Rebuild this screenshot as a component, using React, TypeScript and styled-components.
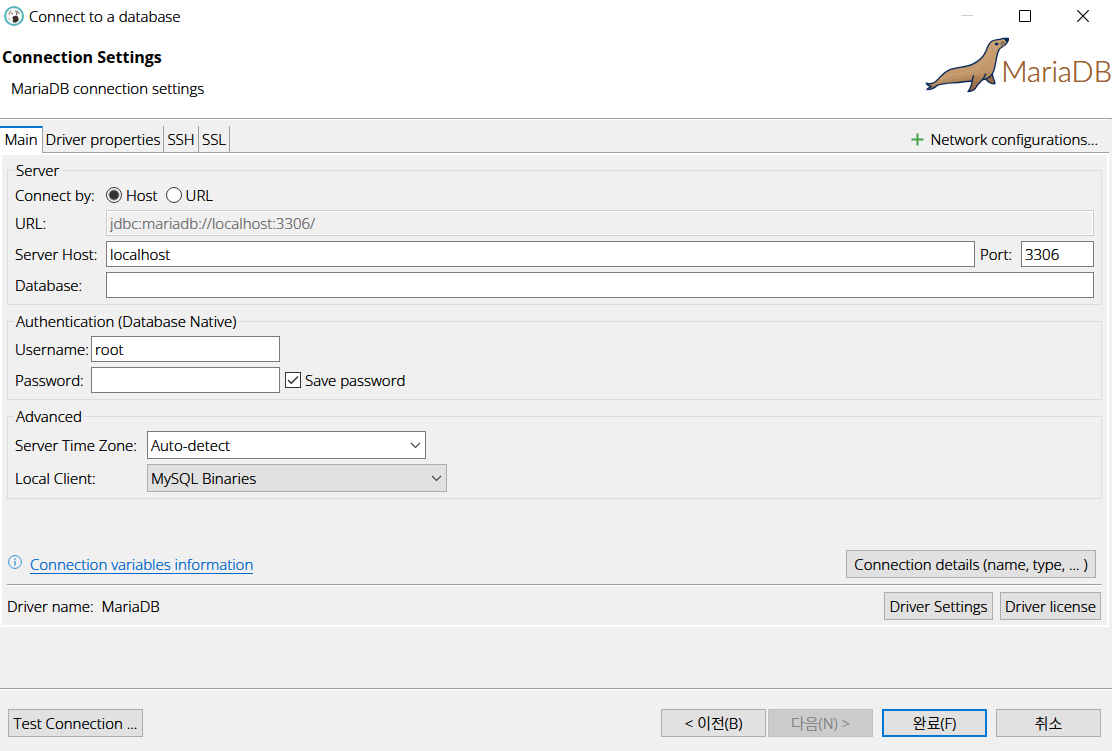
import React from "react";
import styled, { createGlobalStyle, css } from "styled-components";

const GlobalStyle = createGlobalStyle`
  *, *::before, *::after { box-sizing: border-box; }
  body { margin: 0; background: #f0f0f0; }
  body, button, input, select {
    font-family: "Open Sans", "Noto Sans CJK KR", sans-serif;
    font-size: 15px;
    font-weight: 300;
    line-height: 20px;
    color: #000;
    /* a second pass in the same place firms up the light strokes */
    text-shadow: 0 0 0 currentColor;
  }
`;

const Dialog = styled.main`
  display: flex;
  flex-direction: column;
  min-height: 100vh;
  background: #f0f0f0;
`;

const TitleBar = styled.div`
  display: flex;
  align-items: center;
  height: 32px;
  padding-left: 4px;
  gap: 5px;
  background: #fff;
`;

const TitleText = styled.span`
  flex: 1;
`;

const WindowControls = styled.div`
  display: flex;
`;

const WindowButton = styled.button`
  display: flex;
  align-items: center;
  justify-content: center;
  width: 58px;
  height: 32px;
  padding: 0;
  border: 0;
  background: none;
  color: #000;

  &:disabled { color: #ccc; }
`;

const Banner = styled.header`
  display: flex;
  justify-content: space-between;
  height: 87px;
  background: #fff;
  border-bottom: 1px solid #a0a0a0;
`;

const BannerText = styled.div`
  padding: 15px 0 0 2px;
`;

const Heading = styled.h1`
  margin: 0;
  font-size: 16px;
  line-height: 20px;
  font-weight: 700;
  text-shadow: none;
`;

const Description = styled.p`
  margin: 11px 0 0 9px;
`;

const Brand = styled.div`
  display: flex;
  align-items: flex-start;
  margin-top: -2px;
  white-space: nowrap;
`;

const BrandName = styled.span`
  margin: 24px 0 0 -8px;
  font-family: Lato, sans-serif;
  font-weight: 300;
  font-size: 29px;
  line-height: 34px;
  color: #9c6230;
  text-shadow: 0 0 0 #9c6230;
`;

const TabRow = styled.div`
  display: flex;
  align-items: stretch;
  height: 34px;
  margin-right: 3px;
  padding-top: 6px;
  border-top: 1px solid #fff;
`;

const Tab = styled.button<{ $width: number; $active?: boolean }>`
  width: ${(p) => p.$width}px;
  padding: 0;
  border: solid #a0a0a0;
  border-width: 0 1px 1px 0;
  background: #f0f0f0;
  white-space: nowrap;
  ${(p) =>
    p.$active &&
    css`
      border-top: 2px solid #0078d7;
      border-bottom: 0;
      background: #fff;
      padding-bottom: 3px;
    `}
`;

const TabFill = styled.div`
  flex: 1;
  display: flex;
  align-items: center;
  justify-content: flex-end;
  padding-right: 11px;
  border-bottom: 1px solid #a0a0a0;
`;

const FlatButton = styled.button`
  display: flex;
  align-items: center;
  gap: 6px;
  padding: 0;
  border: 0;
  background: none;
  white-space: nowrap;
`;

const Panel = styled.section`
  display: flex;
  flex-direction: column;
  gap: 6px;
  margin-right: 3px;
  padding: 5px;
  border: 2px solid #fff;
`;

const Group = styled.fieldset`
  display: grid;
  gap: 5px;
  min-width: 0;
  margin: 0;
  padding: 4px 7px 6px;
  border: 1px solid #dcdcdc;
`;

const Legend = styled.legend`
  height: 21px;
  margin-left: -1px;
  padding: 0 2px;
`;

const Row = styled.div`
  display: flex;
  align-items: center;
  gap: 5px;
  min-height: 20px;
`;

const Caption = styled.label<{ $width: number }>`
  flex: none;
  width: ${(p) => p.$width}px;
  white-space: nowrap;
`;

const TextBox = styled.input<{ $width?: number }>`
  flex: ${(p) => (p.$width ? `0 0 ${p.$width}px` : "1")};
  min-width: 0;
  height: 26px;
  padding: 0 3px;
  border: 1px solid #7a7a7a;
  border-radius: 0;
  outline: 0;
  background: #fff;

  &:disabled {
    border-color: #ccc;
    box-shadow: inset 0 0 0 1px #fff;
    background: #f0f0f0;
    color: #6d6d6d;
  }
`;

const Choices = styled.div`
  display: flex;
  gap: 8px;
`;

const Choice = styled.label`
  display: flex;
  align-items: center;
  gap: 4px;
`;

const Radio = styled.input`
  appearance: none;
  width: 16px;
  height: 16px;
  margin: 0;
  border: 1px solid #333;
  border-radius: 50%;
  background: #fff;

  &:checked {
    background: radial-gradient(circle, #333 0 4px, #fff 6px);
  }
`;

const TickBox = styled.input`
  appearance: none;
  width: 16px;
  height: 16px;
  margin: 0;
  border: 1px solid #333;
  background: #fff;
`;

const TickHolder = styled.span`
  position: relative;
  display: flex;

  svg {
    position: absolute;
    inset: 0;
    pointer-events: none;
  }
  input:not(:checked) + svg { display: none; }
`;

const SelectHolder = styled.div<{ $width: number }>`
  position: relative;
  width: ${(p) => p.$width}px;

  svg {
    position: absolute;
    top: 11px;
    right: 5px;
    pointer-events: none;
  }
`;

const Select = styled.select<{ $flat?: boolean }>`
  appearance: none;
  display: block;
  width: 100%;
  height: 28px;
  padding: 0 20px 0 3px;
  border: 1px solid ${(p) => (p.$flat ? "#adadad" : "#7a7a7a")};
  border-radius: 0;
  background: ${(p) => (p.$flat ? "#e1e1e1" : "#fff")};
`;

const InfoRow = styled.div`
  display: flex;
  align-items: center;
  gap: 8px;
  margin-top: 45px;
  padding: 0 6px 0 1px;
`;

const InfoLink = styled.a`
  margin-right: auto;
  border-bottom: 1px solid #0066cc;
  color: #0066cc;
  line-height: 18px;
  text-decoration: none;
  text-shadow: 0 0 0 #0066cc;
`;

const Rule = styled.hr`
  width: 100%;
  height: 2px;
  margin: 0;
  border: 0;
  border-top: 1px solid #a0a0a0;
  background: #fff;
`;

const DriverRow = styled.div`
  display: flex;
  align-items: center;
  gap: 7px;
  padding-right: 1px;
`;

const DriverName = styled.span`
  display: flex;
  gap: 8px;
  margin-right: auto;
`;

const PushButton = styled.button<{ $width: number; $primary?: boolean }>`
  width: ${(p) => p.$width}px;
  height: 28px;
  padding: 0;
  border: ${(p) => (p.$primary ? "2px solid #0078d7" : "1px solid #adadad")};
  background: #e1e1e1;
  white-space: nowrap;

  &:disabled {
    border-color: #bfbfbf;
    background: #ccc;
    color: #838383;
  }
`;

const Footer = styled.footer`
  margin-top: auto;
`;

const FooterBar = styled.div`
  display: flex;
  justify-content: space-between;
  padding: 19px 11px 14px 8px;
`;

const Wizard = styled.div`
  display: flex;
  gap: 9px;
`;

const Steps = styled.div`
  display: flex;
  gap: 2px;
`;

const Chevron = () => (
  <svg width="11" height="8" viewBox="0 0 11 8" fill="none" stroke="#444" strokeWidth="1.1" aria-hidden="true">
    <path d="M1 1 5.500 5.500 10 1" />
  </svg>
);

const BeaverIcon = () => (
  <svg width="20" height="20" viewBox="0 0 20 20" aria-hidden="true">
    <circle cx="10" cy="10" r="9" fill="#fbfaf8" stroke="#4fb5b8" strokeWidth="2" />
    <circle cx="10" cy="10" r="7.8" fill="none" stroke="#b9dfe0" strokeWidth=".6" />
    <path d="M4.500 8.500C4.500 5.800 6 4.600 8 4.600L7 6 5.600 9Z" fill="#a39b96" />
    <path d="M11 4.500C13.500 4 15.800 6 15.600 8.500L14 7.300 11.500 6.300Z" fill="#8b827d" />
    <path d="M8.200 12 9.500 10.200 12.500 9.600 14.300 11.200 14.500 14.800 11.500 16.800 8.500 16 9.200 13.600Z" fill="#3a302c" />
    <path d="M4.500 11 6.500 12.800 6.500 15 4.500 13.500Z" fill="#cfc9c4" />
    <circle cx="8.300" cy="7.600" r=".8" fill="#6a615c" />
    <circle cx="12.600" cy="8" r=".7" fill="#2d2522" />
  </svg>
);

const Seal = () => (
  <svg width="88" height="70" viewBox="0 0 264 210" aria-hidden="true">
    <defs>
      <linearGradient id="fur" x1="0.45" y1="0.2" x2="0.65" y2="0.95">
        <stop offset="0" stopColor="#c9a074" />
        <stop offset="0.65" stopColor="#c1966a" />
        <stop offset="1" stopColor="#8d6238" />
      </linearGradient>
      <linearGradient id="flipper" x1="0.8" y1="0" x2="0.2" y2="1">
        <stop offset="0" stopColor="#b98d60" />
        <stop offset="1" stopColor="#8d6238" />
      </linearGradient>
    </defs>
    <g stroke="#06285c" strokeWidth="4" strokeLinejoin="round" strokeLinecap="round">
      <path
        d="M193 146C200 155 209 163 222 161C221 150 214 143 214 130L200 126Z"
        fill="#96693e"
      />
      <path
        d="M16 159C24 163 34 161 42 156C58 144 63 129 82 121C104 111 134 112 152 104C174 94 187 82 195 63C199 51 203 41 212 34C223 26 235 31 247 25L262 25C264 31 259 36 256 41C251 49 238 51 233 61C225 77 226 101 218 123C212 138 204 146 191 148C169 154 148 153 125 156C97 160 72 157 49 166C43 172 36 179 18 179C20 173 26 173 31 170C25 168 17 167 16 159Z"
        fill="url(#fur)"
      />
      <path
        d="M157 137C152 151 155 168 141 185C153 184 163 180 166 170C172 158 188 153 194 132"
        fill="url(#flipper)"
      />
    </g>
    <path
      d="M62 146C82 132 112 134 139 126C173 115 197 94 207 59"
      fill="none"
      stroke="#dab88e"
      strokeWidth="5"
      strokeLinecap="round"
      opacity=".3"
    />
    <path d="M247 25 262 24C264 31 260 35 256 36C253 31 250 30 247 25Z" fill="#06285c" />
    <ellipse cx="227" cy="42" rx="6" ry="4" fill="#06285c" />
    <ellipse cx="245" cy="41" rx="7" ry="8" fill="#8a7563" />
  </svg>
);

export default function App() {
  return (
    <Dialog>
      <GlobalStyle />
      <TitleBar>
        <BeaverIcon />
        <TitleText>Connect to a database</TitleText>
        <WindowControls>
          <WindowButton disabled aria-label="Minimize">
            <svg width="12" height="12" viewBox="0 0 12 12"><path d="M0 5.500H12" stroke="currentColor" /></svg>
          </WindowButton>
          <WindowButton aria-label="Maximize">
            <svg width="12" height="12" viewBox="0 0 12 12"><path d="M.5.5H11.500V11.500H.5Z" fill="none" stroke="currentColor" /></svg>
          </WindowButton>
          <WindowButton aria-label="Close">
            <svg width="12" height="12" viewBox="0 0 12 12"><path d="M.3.3 11.700 11.700M11.700.3.3 11.700" stroke="currentColor" strokeWidth="1.2" /></svg>
          </WindowButton>
        </WindowControls>
      </TitleBar>

      <Banner>
        <BannerText>
          <Heading>Connection Settings</Heading>
          <Description>MariaDB connection settings</Description>
        </BannerText>
        <Brand>
          <Seal />
          <BrandName>MariaDB</BrandName>
        </Brand>
      </Banner>

      <TabRow role="tablist">
        <Tab $width={43} $active role="tab" aria-selected="true">Main</Tab>
        <Tab $width={121} role="tab" aria-selected="false">Driver properties</Tab>
        <Tab $width={35} role="tab" aria-selected="false">SSH</Tab>
        <Tab $width={31} role="tab" aria-selected="false">SSL</Tab>
        <TabFill>
          <FlatButton>
            <svg width="13" height="13" viewBox="0 0 13 13" aria-hidden="true">
              <path d="M6.500 0.500V12.500M.5 6.500H12.500" stroke="#45a147" strokeWidth="2" />
            </svg>
            Network configurations...
          </FlatButton>
        </TabFill>
      </TabRow>

      <Panel>
        <Group>
          <Legend>Server</Legend>
          <Row>
            <Caption as="span" $width={86}>Connect by:</Caption>
            <Choices>
              <Choice><Radio type="radio" name="connect" defaultChecked />Host</Choice>
              <Choice><Radio type="radio" name="connect" />URL</Choice>
            </Choices>
          </Row>
          <Row>
            <Caption $width={86} htmlFor="url">URL:</Caption>
            <TextBox id="url" disabled defaultValue="jdbc:mariadb://localhost:3306/" />
          </Row>
          <Row>
            <Caption $width={86} htmlFor="host">Server Host:</Caption>
            <TextBox id="host" defaultValue="localhost" />
            <Caption $width={36} htmlFor="port">Port:</Caption>
            <TextBox id="port" $width={73} defaultValue="3306" />
          </Row>
          <Row>
            <Caption $width={86} htmlFor="database">Database:</Caption>
            <TextBox id="database" />
          </Row>
        </Group>

        <Group>
          <Legend>Authentication (Database Native)</Legend>
          <Row>
            <Caption $width={71} htmlFor="user">Username:</Caption>
            <TextBox id="user" $width={189} defaultValue="root" />
          </Row>
          <Row>
            <Caption $width={71} htmlFor="password">Password:</Caption>
            <TextBox id="password" type="password" $width={189} />
            <Choice>
              <TickHolder>
                <TickBox type="checkbox" defaultChecked />
                <svg width="16" height="16" viewBox="0 0 16 16" fill="none" stroke="#333" strokeWidth="1.4">
                  <path d="M3 8 6.300 11.300 13 4.500" />
                </svg>
              </TickHolder>
              Save password
            </Choice>
          </Row>
        </Group>

        <Group>
          <Legend>Advanced</Legend>
          <Row>
            <Caption $width={127} htmlFor="zone">Server Time Zone:</Caption>
            <SelectHolder $width={279}>
              <Select id="zone"><option>Auto-detect</option></Select>
              <Chevron />
            </SelectHolder>
          </Row>
          <Row>
            <Caption $width={127} htmlFor="client">Local Client:</Caption>
            <SelectHolder $width={300}>
              <Select id="client" $flat><option>MySQL Binaries</option></Select>
              <Chevron />
            </SelectHolder>
          </Row>
        </Group>

        <InfoRow>
          <svg width="14" height="18" viewBox="0 0 14 18" fill="none" stroke="#2f8fd0" aria-hidden="true">
            <circle cx="7" cy="7" r="6.400" />
            <path d="M7 6V10.500M7 3.500V5" strokeWidth="1.300" />
          </svg>
          <InfoLink href="#variables">Connection variables information</InfoLink>
          <PushButton $width={250}>Connection details (name, type, ... )</PushButton>
        </InfoRow>
        <Rule />
        <DriverRow>
          <DriverName>
            <span>Driver name:</span>
            <span>MariaDB</span>
          </DriverName>
          <PushButton $width={109}>Driver Settings</PushButton>
          <PushButton $width={101}>Driver license</PushButton>
        </DriverRow>
      </Panel>

      <Footer>
        <Rule />
        <FooterBar>
          <PushButton $width={135}>Test Connection ...</PushButton>
          <Wizard>
            <Steps>
              <PushButton $width={105}>&lt; 이전(B)</PushButton>
              <PushButton $width={105} disabled>다음(N) &gt;</PushButton>
            </Steps>
            <PushButton $width={105} $primary>완료(F)</PushButton>
            <PushButton $width={105}>취소</PushButton>
          </Wizard>
        </FooterBar>
      </Footer>
    </Dialog>
  );
}
